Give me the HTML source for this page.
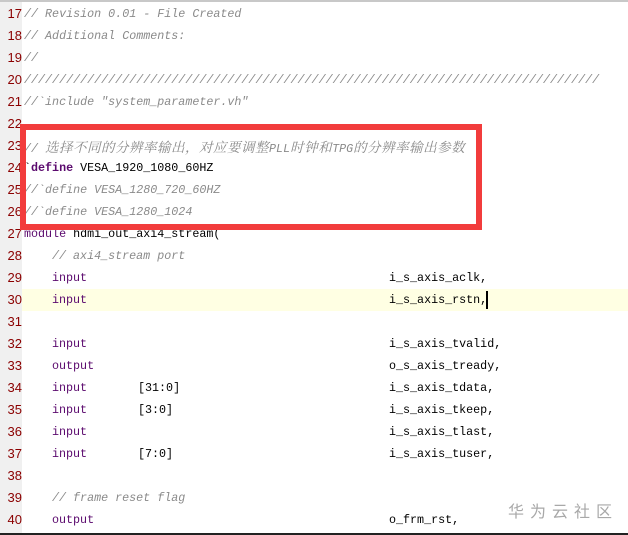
<!DOCTYPE html>
<html><head><meta charset="utf-8"><style>
body{margin:0;width:628px;height:535px;background:#fff;position:relative;overflow:hidden;font-family:"Liberation Mono","Noto Sans CJK SC",monospace;}
.top{position:absolute;left:0;top:0;width:628px;height:2px;background:#c8c8c8}
.gut{position:absolute;left:0;top:2px;width:22px;height:531px;background:#f0f0f0}
.bot{position:absolute;left:0;top:533px;width:628px;height:2px;background:#222}
.hl{position:absolute;left:22px;top:289px;width:606px;height:22px;background:#ffffe3}
.ln{position:absolute;left:0;width:22px;text-align:right;font-family:"Liberation Sans",sans-serif;font-size:13px;color:#8b0000;line-height:22px}
.c{position:absolute;font-size:11.7px;line-height:22px;white-space:pre;color:#000}
.cm{color:#8a8a8a;font-style:italic}
.kw{color:#5b0a6e}
.b{font-weight:bold}
.cj{font-family:"Noto Serif CJK SC","Noto Sans CJK SC",serif;font-size:13.5px;letter-spacing:0.5px}
.box{position:absolute;left:20px;top:124px;width:450px;height:94px;border:6px solid #f23c3c}
.wm{position:absolute;left:508px;top:498px;font-family:"Liberation Sans","Noto Sans CJK SC",sans-serif;font-size:16px;color:#a8a8a8;letter-spacing:6px}
.cur{position:absolute;left:486px;top:291px;width:2px;height:18px;background:#000}
</style></head><body>
<div class="top"></div><div class="gut"></div><div class="hl"></div>
<div class="ln" style="top:3px">17</div>
<div class="ln" style="top:25px">18</div>
<div class="ln" style="top:47px">19</div>
<div class="ln" style="top:69px">20</div>
<div class="ln" style="top:91px">21</div>
<div class="ln" style="top:113px">22</div>
<div class="ln" style="top:135px">23</div>
<div class="ln" style="top:157px">24</div>
<div class="ln" style="top:179px">25</div>
<div class="ln" style="top:201px">26</div>
<div class="ln" style="top:223px">27</div>
<div class="ln" style="top:245px">28</div>
<div class="ln" style="top:267px">29</div>
<div class="ln" style="top:289px">30</div>
<div class="ln" style="top:311px">31</div>
<div class="ln" style="top:333px">32</div>
<div class="ln" style="top:355px">33</div>
<div class="ln" style="top:377px">34</div>
<div class="ln" style="top:399px">35</div>
<div class="ln" style="top:421px">36</div>
<div class="ln" style="top:443px">37</div>
<div class="ln" style="top:465px">38</div>
<div class="ln" style="top:487px">39</div>
<div class="ln" style="top:509px">40</div>

<div class="c cm" style="left:24px;top:3px">// Revision 0.01 - File Created</div>
<div class="c cm" style="left:24px;top:25px">// Additional Comments:</div>
<div class="c cm" style="left:24px;top:47px">//</div>
<div class="c cm" style="left:24px;top:69px">//////////////////////////////////////////////////////////////////////////////////</div>
<div class="c cm" style="left:24px;top:91px">//`include "system_parameter.vh"</div>
<div class="c cm" style="left:24px;top:135px">// <span class="cj">选择不同的分辨率输出，对应要调整</span>PLL<span class="cj">时钟和</span>TPG<span class="cj">的分辨率输出参数</span></div>
<div class="c" style="left:24px;top:157px">`<span class="kw b">define</span> VESA_1920_1080_60HZ</div>
<div class="c cm" style="left:24px;top:179px">//`define VESA_1280_720_60HZ</div>
<div class="c cm" style="left:24px;top:201px">//`define VESA_1280_1024</div>
<div class="c" style="left:24px;top:223px"><span class="kw">module</span> hdmi_out_axi4_stream(</div>
<div class="c cm" style="left:52px;top:245px">// axi4_stream port</div>
<div class="c kw" style="left:52px;top:267px">input</div><div class="c" style="left:389px;top:267px">i_s_axis_aclk,</div>
<div class="c kw" style="left:52px;top:289px">input</div><div class="c" style="left:389px;top:289px">i_s_axis_rstn,</div>
<div class="cur"></div>
<div class="c kw" style="left:52px;top:333px">input</div><div class="c" style="left:389px;top:333px">i_s_axis_tvalid,</div>
<div class="c kw" style="left:52px;top:355px">output</div><div class="c" style="left:389px;top:355px">o_s_axis_tready,</div>
<div class="c kw" style="left:52px;top:377px">input</div><div class="c" style="left:138px;top:377px">[31:0]</div><div class="c" style="left:389px;top:377px">i_s_axis_tdata,</div>
<div class="c kw" style="left:52px;top:399px">input</div><div class="c" style="left:138px;top:399px">[3:0]</div><div class="c" style="left:389px;top:399px">i_s_axis_tkeep,</div>
<div class="c kw" style="left:52px;top:421px">input</div><div class="c" style="left:389px;top:421px">i_s_axis_tlast,</div>
<div class="c kw" style="left:52px;top:443px">input</div><div class="c" style="left:138px;top:443px">[7:0]</div><div class="c" style="left:389px;top:443px">i_s_axis_tuser,</div>
<div class="c cm" style="left:52px;top:487px">// frame reset flag</div>
<div class="c kw" style="left:52px;top:509px">output</div><div class="c" style="left:389px;top:509px">o_frm_rst,</div>

<div class="box"></div>
<div class="wm">华为云社区</div>
<div class="bot"></div>
</body></html>
